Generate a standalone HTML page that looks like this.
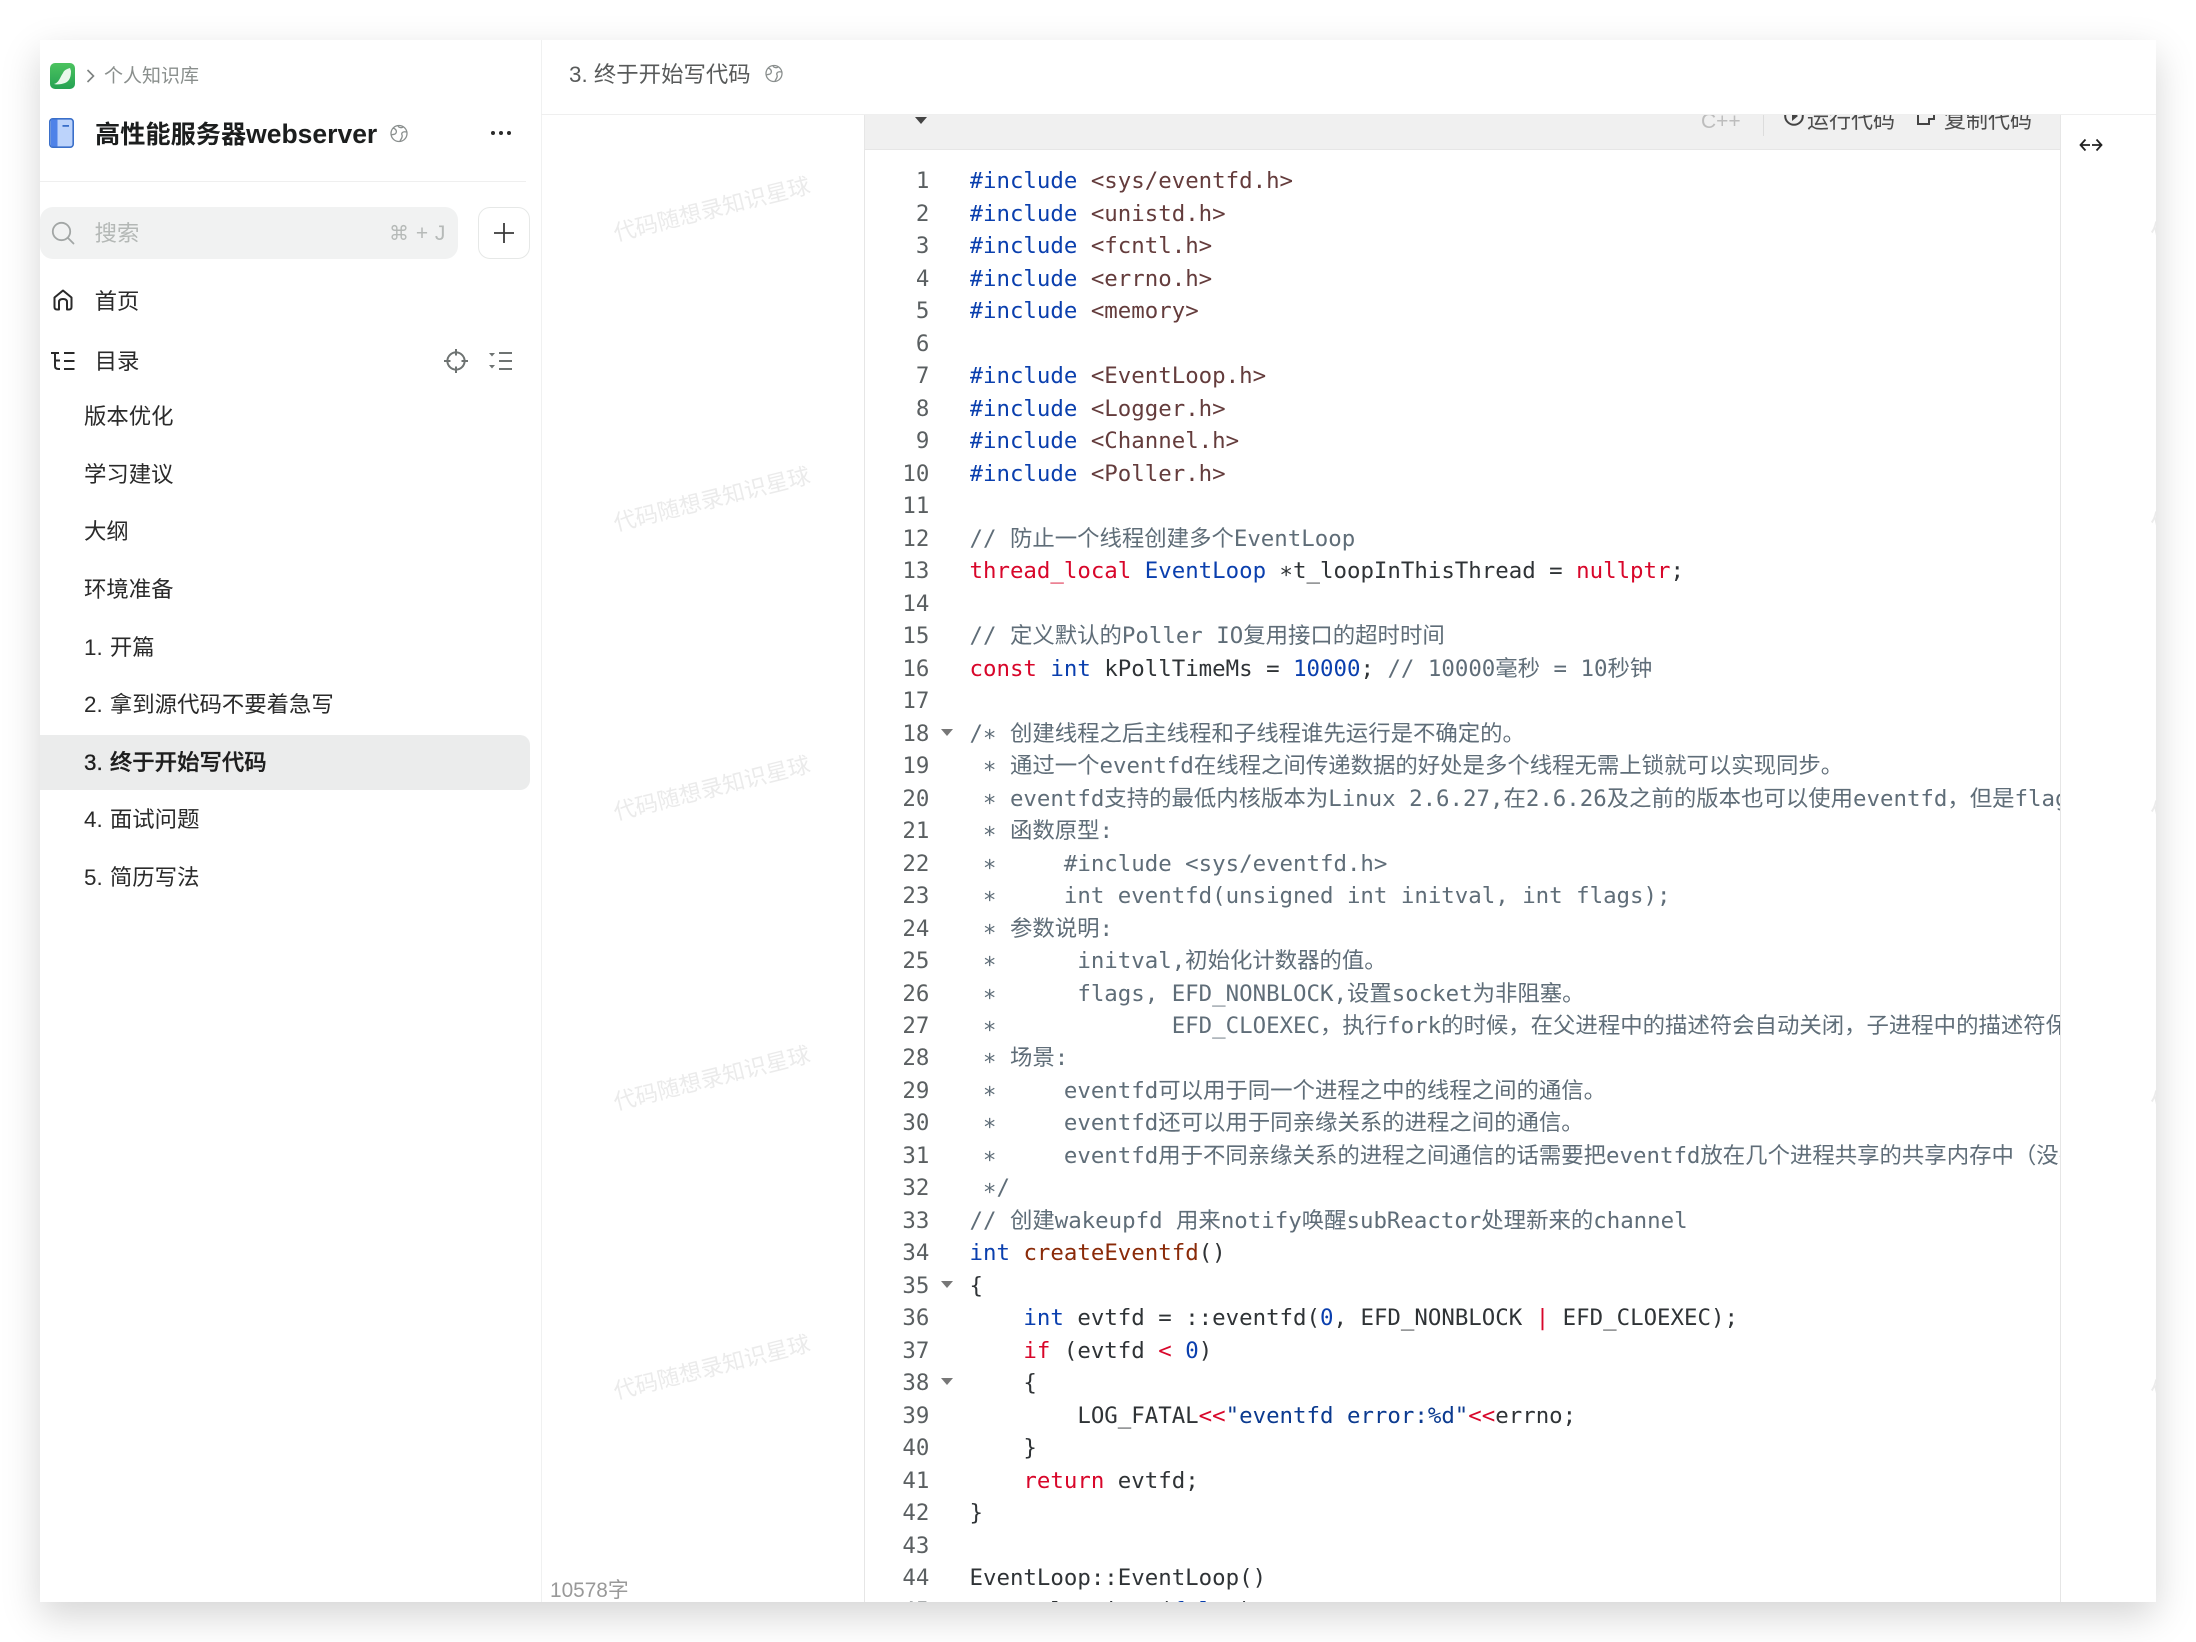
<!DOCTYPE html>
<html lang="zh-CN">
<head>
<meta charset="utf-8">
<title>3. 终于开始写代码</title>
<style>
html,body{margin:0;padding:0;background:#fff;width:2196px;height:1642px;overflow:hidden}
body{font-family:"Liberation Sans","Noto Sans CJK SC",sans-serif;color:#262626;position:relative}
#win{position:absolute;left:40px;top:40px;width:2116px;height:1562px;background:#fff;box-shadow:0 14px 36px rgba(0,0,0,.17);overflow:hidden}
.a{position:absolute;white-space:nowrap}
.abs{position:absolute}
.wm{position:absolute;white-space:nowrap;font-size:22.4px;color:#ebebeb;transform:rotate(-14deg);transform-origin:center;line-height:30px;width:210px;text-align:center}
pre{margin:0;font-family:"DejaVu Sans Mono","Noto Sans CJK SC",monospace;font-size:22.4px;line-height:32.48px;position:absolute}
#code{left:929.5px;top:125.4px;color:#2f3336;width:1090.5px;height:1436.6px;overflow:hidden}
#nums{top:125.4px;text-align:right;color:#5a5f61;padding:0;height:1436.6px;overflow:hidden;left:561.4px;width:328px}
.k{color:#0a3fae}.r{color:#d8062a}.s{color:#643c3c}.c{color:#5f6d78}.f{color:#8a2a08}.n{color:#0a3fae}.t{color:#0b3a8f}
.it{font-size:22.4px;line-height:30px;color:#2a2a2a;left:44px;transform:translateY(-15px);word-spacing:1px}
</style>
</head>
<body>
<div id="win">
  <!-- watermarks (behind) -->
  <div class="wm" style="left:567px;top:155px">代码随想录知识星球</div>
  <div class="wm" style="left:567px;top:444.5px">代码随想录知识星球</div>
  <div class="wm" style="left:567px;top:734px">代码随想录知识星球</div>
  <div class="wm" style="left:567px;top:1023.5px">代码随想录知识星球</div>
  <div class="wm" style="left:567px;top:1313px">代码随想录知识星球</div>
  <div class="wm" style="left:2104px;top:155px">代码随想录知识星球</div>
  <div class="wm" style="left:2104px;top:444.5px">代码随想录知识星球</div>
  <div class="wm" style="left:2104px;top:734px">代码随想录知识星球</div>
  <div class="wm" style="left:2104px;top:1023.5px">代码随想录知识星球</div>
  <div class="wm" style="left:2104px;top:1313px">代码随想录知识星球</div>

  <!-- sidebar -->
  <div class="abs" style="left:501px;top:0;width:1px;height:1562px;background:#f0f1f1"></div>
  <svg class="abs" style="left:10px;top:23px" width="25" height="26" viewBox="0 0 25 26">
    <defs><linearGradient id="g" x1="0" y1="0" x2="0" y2="1"><stop offset="0" stop-color="#4cc35f"/><stop offset="1" stop-color="#25a253"/></linearGradient></defs>
    <rect width="25" height="26" rx="5" fill="url(#g)"/>
    <path d="M4 21 C9 20 10 14 13 10 C14 7 17 6 20 5 L21 8 C21 13 20 18 15 20 C12 21 8 22 4 21Z" fill="#e9f7ec"/>
  </svg>
  <svg class="abs" style="left:46px;top:28px" width="9" height="16" viewBox="0 0 9 16"><path d="M1.5 2 L7.5 8 L1.5 14" fill="none" stroke="#7c8180" stroke-width="1.6"/></svg>
  <div class="a" style="left:64px;top:22.4px;font-size:19px;line-height:30px;color:#8a8f8d">个人知识库</div>

  <svg class="abs" style="left:9px;top:78px" width="25" height="30" viewBox="0 0 25 30">
    <rect x=".8" y=".8" width="23.4" height="28.4" rx="3" fill="#bcd3fb" stroke="#3a6fc9" stroke-width="1.6"/>
    <path d="M2 1.5 H8.5 V28.5 H2 Z" fill="#4e82e8"/>
    <rect x="13.5" y="7" width="6.5" height="1.8" fill="#3a6fc9"/>
  </svg>
  <div class="a" style="left:55px;top:76px;font-size:25.2px;line-height:36px;font-weight:700;color:#1c1e1e">高性能服务器<span style="font-size:26.5px">webserver</span></div>
  <svg class="abs" style="left:350px;top:84px" width="18" height="19" viewBox="0 0 18 19" fill="none" stroke="#8a8f8e" stroke-width="1.3"><circle cx="9" cy="9.5" r="8"/><path d="M3 4 C6 5 7 7 6 9 C5 11 3 10 1.5 11M8 2 C9 4 12 4 13 3M16.5 8 C13 7 11 9 12 11 C13 13 11 15 10 17"/></svg>
  <svg class="abs" style="left:450px;top:89px" width="22" height="8" viewBox="0 0 22 8" fill="#2a2a2a"><circle cx="3" cy="4" r="2"/><circle cx="11" cy="4" r="2"/><circle cx="19" cy="4" r="2"/></svg>
  <div class="abs" style="left:0;top:141px;width:486px;height:1px;background:#efefef"></div>

  <div class="abs" style="left:0;top:167px;width:418px;height:52px;background:#f1f2f2;border-radius:13px"></div>
  <svg class="abs" style="left:11px;top:181px" width="24" height="24" viewBox="0 0 24 24" fill="none" stroke="#a2a6a5" stroke-width="1.8"><circle cx="10.5" cy="10.5" r="8.7"/><path d="M17 17 L22.5 22.5" stroke-linecap="round"/></svg>
  <div class="a" style="left:54.6px;top:179.4px;font-size:22.4px;line-height:30px;color:#b4b8b6">搜索</div>
  <div class="a" style="left:349px;top:178.4px;font-size:21px;line-height:30px;color:#b6bab8;word-spacing:1px"><span style="font-family:'DejaVu Sans',sans-serif;font-size:20px">⌘</span> + J</div>
  <div class="abs" style="left:438px;top:167px;width:50px;height:50px;border:1px solid #e6e8e7;border-radius:12px;background:#fff"></div>
  <svg class="abs" style="left:454px;top:183px" width="20" height="20" viewBox="0 0 20 20"><path d="M10 0 V20 M0 10 H20" stroke="#3a3a3a" stroke-width="1.8"/></svg>

  <svg class="abs" style="left:13px;top:249px" width="20" height="22" viewBox="0 0 20 22" fill="none" stroke="#2a2a2a" stroke-width="2" stroke-linejoin="round"><path d="M1.5 8.5 L10 1.5 L18.5 8.5 V18 Q18.5 20.5 16 20.5 H14 V13 Q14 10 10 10 Q6 10 6 13 V20.5 H4 Q1.5 20.5 1.5 18 Z"/></svg>
  <div class="a" style="left:54.6px;top:247.4px;font-size:22.4px;line-height:30px;color:#2a2a2a">首页</div>

  <svg class="abs" style="left:11px;top:311px" width="24" height="20" viewBox="0 0 24 20" fill="none" stroke="#2a2a2a" stroke-width="2"><path d="M0 2 H8 M4 2 V15 Q4 18 7.5 18 H9 M13 2 H23.5 M13 10 H23.5 M13 18 H23.5 M4 9.5 H9"/></svg>
  <div class="a" style="left:54.6px;top:307.4px;font-size:22.4px;line-height:30px;color:#2a2a2a">目录</div>
  <svg class="abs" style="left:403px;top:308px" width="26" height="26" viewBox="0 0 26 26" fill="none" stroke="#6e7372" stroke-width="2"><circle cx="13" cy="13" r="8.6"/><path d="M13 1 V7.5 M13 18.5 V25 M1 13 H7.5 M18.5 13 H25"/></svg>
  <svg class="abs" style="left:449px;top:311px" width="24" height="20" viewBox="0 0 24 20" fill="#6e7372"><path d="M0 2 H6 L3 5.5Z M0 14 H6 L3 17.5Z"/><path d="M10 2 H23 M10 10 H23 M10 18 H23" stroke="#6e7372" stroke-width="2" fill="none"/></svg>

  <div class="a it" style="top:377.4px">版本优化</div>
  <div class="a it" style="top:435.4px">学习建议</div>
  <div class="a it" style="top:492.4px">大纲</div>
  <div class="a it" style="top:550.4px">环境准备</div>
  <div class="a it" style="top:608.4px">1. 开篇</div>
  <div class="a it" style="top:665.4px">2. 拿到源代码不要着急写</div>
  <div class="abs" style="left:0;top:695px;width:490px;height:55px;background:#ebecec;border-radius:0 10px 10px 0"></div>
  <div class="a it" style="top:723.4px;font-weight:500;color:#1e1e1e;-webkit-text-stroke:.35px #1e1e1e">3. 终于开始写代码</div>
  <div class="a it" style="top:780.4px">4. 面试问题</div>
  <div class="a it" style="top:838.4px">5. 简历写法</div>

  <!-- doc header -->
  <div class="abs" style="left:501px;top:74px;width:1615px;height:1px;background:#efefef"></div>
  <div class="a" style="left:529px;top:20px;font-size:22.4px;line-height:30px;color:#585a5a">3. 终于开始写代码</div>
  <svg class="abs" style="left:725px;top:24px" width="18" height="19" viewBox="0 0 18 19" fill="none" stroke="#8a8f8e" stroke-width="1.3"><circle cx="9" cy="9.5" r="8"/><path d="M3 4 C6 5 7 7 6 9 C5 11 3 10 1.5 11M8 2 C9 4 12 4 13 3M16.5 8 C13 7 11 9 12 11 C13 13 11 15 10 17"/></svg>
  <div class="a" style="left:510px;top:1536px;font-size:20.8px;line-height:30px;color:#999">10578字</div>

  <!-- code block -->
  <div class="abs" style="left:824px;top:75px;width:1px;height:1487px;background:#e6e6e6"></div>
  <div class="abs" style="left:2020px;top:75px;width:1px;height:1487px;background:#e6e6e6"></div>
  <div class="abs" style="left:825px;top:75px;width:1195px;height:1487px;background:#fff"></div>
  <div class="abs" style="left:825px;top:75px;width:1195px;height:34px;background:#f0f0f0;border-bottom:1px solid #e6e6e6;overflow:hidden">
    <svg class="abs" style="left:50px;top:2px" width="12" height="7" viewBox="0 0 12 7"><path d="M0 0 H12 L6 7Z" fill="#444"/></svg>
    <div class="a" style="left:836px;top:-8px;font-size:21px;line-height:30px;color:#bdbdbd">C++</div>
    <div class="abs" style="left:898px;top:0;width:1px;height:21px;background:#dcdcdc"></div>
    <svg class="abs" style="left:919px;top:-9px" width="20" height="20" viewBox="0 0 20 20"><circle cx="10" cy="10" r="8.8" fill="none" stroke="#444" stroke-width="2"/><path d="M8 5 L14 10 L8 15Z" fill="#444"/></svg>
    <div class="a" style="left:942px;top:-9px;font-size:22px;line-height:30px;color:#4d4d4d">运行代码</div>
    <svg class="abs" style="left:1052px;top:-7px" width="20" height="20" viewBox="0 0 20 20" fill="none" stroke="#444" stroke-width="2"><path d="M6 1 V6 H1 V16 H12 V11 H17 V1"/></svg>
    <div class="a" style="left:1079px;top:-9px;font-size:22px;line-height:30px;color:#4d4d4d">复制代码</div>
  </div>
  <svg class="abs" style="left:2038.6px;top:97px" width="24" height="16" viewBox="0 0 24 16" fill="none" stroke="#222" stroke-width="1.8"><path d="M11 8 H2 M6.5 2.5 L1.5 8 L6.5 13.5 M13 8 H22 M17.5 2.5 L22.5 8 L17.5 13.5"/></svg>

  <pre id="nums">1
2
3
4
5
6
7
8
9
10
11
12
13
14
15
16
17
18
19
20
21
22
23
24
25
26
27
28
29
30
31
32
33
34
35
36
37
38
39
40
41
42
43
44
45</pre>
  <svg class="abs" style="left:901px;top:689px" width="12" height="8" viewBox="0 0 12 8"><path d="M0 0 H12 L6 7Z" fill="#777"/></svg>
  <svg class="abs" style="left:901px;top:1240.5px" width="12" height="8" viewBox="0 0 12 8"><path d="M0 0 H12 L6 7Z" fill="#777"/></svg>
  <svg class="abs" style="left:901px;top:1337.5px" width="12" height="8" viewBox="0 0 12 8"><path d="M0 0 H12 L6 7Z" fill="#777"/></svg>

<pre id="code"><span class="k">#include</span> <span class="s">&lt;sys/eventfd.h&gt;</span>
<span class="k">#include</span> <span class="s">&lt;unistd.h&gt;</span>
<span class="k">#include</span> <span class="s">&lt;fcntl.h&gt;</span>
<span class="k">#include</span> <span class="s">&lt;errno.h&gt;</span>
<span class="k">#include</span> <span class="s">&lt;memory&gt;</span>

<span class="k">#include</span> <span class="s">&lt;EventLoop.h&gt;</span>
<span class="k">#include</span> <span class="s">&lt;Logger.h&gt;</span>
<span class="k">#include</span> <span class="s">&lt;Channel.h&gt;</span>
<span class="k">#include</span> <span class="s">&lt;Poller.h&gt;</span>

<span class="c">// 防止一个线程创建多个EventLoop</span>
<span class="r">thread_local</span> <span class="k">EventLoop</span> ∗t_loopInThisThread = <span class="r">nullptr</span>;

<span class="c">// 定义默认的Poller IO复用接口的超时时间</span>
<span class="r">const</span> <span class="k">int</span> kPollTimeMs = <span class="n">10000</span>; <span class="c">// 10000毫秒 = 10秒钟</span>

<span class="c">/∗ 创建线程之后主线程和子线程谁先运行是不确定的。
 ∗ 通过一个eventfd在线程之间传递数据的好处是多个线程无需上锁就可以实现同步。
 ∗ eventfd支持的最低内核版本为Linux 2.6.27,在2.6.26及之前的版本也可以使用eventfd，但是flags必须设置为0。
 ∗ 函数原型:
 ∗     #include &lt;sys/eventfd.h&gt;
 ∗     int eventfd(unsigned int initval, int flags);
 ∗ 参数说明:
 ∗      initval,初始化计数器的值。
 ∗      flags, EFD_NONBLOCK,设置socket为非阻塞。
 ∗             EFD_CLOEXEC，执行fork的时候，在父进程中的描述符会自动关闭，子进程中的描述符保留。
 ∗ 场景:
 ∗     eventfd可以用于同一个进程之中的线程之间的通信。
 ∗     eventfd还可以用于同亲缘关系的进程之间的通信。
 ∗     eventfd用于不同亲缘关系的进程之间通信的话需要把eventfd放在几个进程共享的共享内存中（没有测试过）。
 ∗/</span>
<span class="c">// 创建wakeupfd 用来notify唤醒subReactor处理新来的channel</span>
<span class="k">int</span> <span class="f">createEventfd</span>()
{
    <span class="k">int</span> evtfd = ::eventfd(<span class="n">0</span>, EFD_NONBLOCK <span class="r">|</span> EFD_CLOEXEC);
    <span class="r">if</span> (evtfd <span class="r">&lt;</span> <span class="n">0</span>)
    {
        LOG_FATAL<span class="r">&lt;&lt;</span><span class="t">"eventfd error:%d"</span><span class="r">&lt;&lt;</span>errno;
    }
    <span class="r">return</span> evtfd;
}

EventLoop::EventLoop()
    : looping_(<span class="n">false</span>)</pre>
</div>
</body>
</html>
